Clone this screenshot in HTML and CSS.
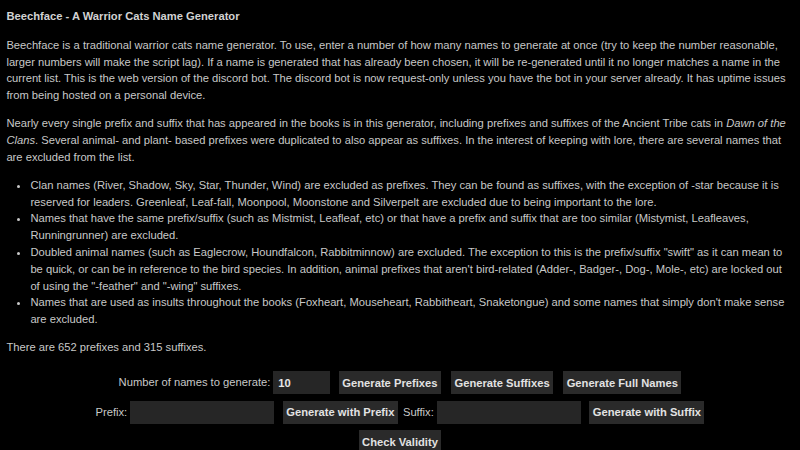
FILE: index.html
```html
<!DOCTYPE html>
<html lang="en">
<head>
<meta charset="utf-8">
<title>Beechface - A Warrior Cats Name Generator</title>
<link rel="stylesheet" href="styles.css">
</head>
<body>
<div class="page">
  <div class="title">Beechface - A Warrior Cats Name Generator</div>
  <p>Beechface is a traditional warrior cats name generator. To use, enter a number of how many names to generate at once (try to keep the number reasonable, larger numbers will make the script lag). If a name is generated that has already been chosen, it will be re-generated until it no longer matches a name in the current list. This is the web version of the discord bot. The discord bot is now request-only unless you have the bot in your server already. It has uptime issues from being hosted on a personal device.</p>
  <p>Nearly every single prefix and suffix that has appeared in the books is in this generator, including prefixes and suffixes of the Ancient Tribe cats in <i>Dawn of the Clans</i>. Several animal- and plant- based prefixes were duplicated to also appear as suffixes. In the interest of keeping with lore, there are several names that are excluded from the list.</p>
  <ul>
    <li>Clan names (River, Shadow, Sky, Star, Thunder, Wind) are excluded as prefixes. They can be found as suffixes, with the exception of -star because it is reserved for leaders. Greenleaf, Leaf-fall, Moonpool, Moonstone and Silverpelt are excluded due to being important to the lore.</li>
    <li>Names that have the same prefix/suffix (such as Mistmist, Leafleaf, etc) or that have a prefix and suffix that are too similar (Mistymist, Leafleaves, Runningrunner) are excluded.</li>
    <li>Doubled animal names (such as Eaglecrow, Houndfalcon, Rabbitminnow) are excluded. The exception to this is the prefix/suffix "swift" as it can mean to be quick, or can be in reference to the bird species. In addition, animal prefixes that aren't bird-related (Adder-, Badger-, Dog-, Mole-, etc) are locked out of using the "-feather" and "-wing" suffixes.</li>
    <li>Names that are used as insults throughout the books (Foxheart, Mouseheart, Rabbitheart, Snaketongue) and some names that simply don't make sense are excluded.</li>
  </ul>
  <p>There are 652 prefixes and 315 suffixes.</p>
  <div class="controls">
    <div class="row">
      <label class="field"><span>Number of names to generate:</span><input class="num" type="text" value="10"></label>
      <button class="btn">Generate Prefixes</button>
      <button class="btn">Generate Suffixes</button>
      <button class="btn">Generate Full Names</button>
    </div>
    <div class="row">
      <label class="field"><span>Prefix:</span><input class="txt" type="text"></label>
      <button class="btn">Generate with Prefix</button>
      <label class="field after-btn"><span>Suffix:</span><input class="txt" type="text"></label>
      <button class="btn">Generate with Suffix</button>
    </div>
    <div class="row">
      <button class="btn">Check Validity</button>
    </div>
  </div>
</div>
</body>
</html>
```
FILE: styles.css
```css
html, body {
  margin: 0;
  padding: 0;
  background: #000;
}
.page {
  padding: 7.5px 6.4px 0 6.4px;
  font-family: "Liberation Sans", Arial, sans-serif;
  font-size: 11.2px;
  line-height: 16.8px;
  color: #c8c8c8;
}
.title {
  font-weight: bold;
  color: #d2d2d2;
  margin-bottom: 12.5px;
}
p {
  margin: 0 0 11.2px 0;
}
ul {
  margin: 0 0 11.2px 0;
  padding-left: 24px;
}
.controls {
  display: flex;
  flex-direction: column;
  gap: 6.5px;
  padding-top: 4px;
}
.row {
  display: flex;
  justify-content: center;
  align-items: center;
  gap: 8.5px;
}
.field {
  display: flex;
  align-items: center;
  gap: 3px;
}
.after-btn {
  margin-left: -3.5px;
}
input {
  font-family: "Liberation Sans", Arial, sans-serif;
  font-size: 11.2px;
  font-weight: bold;
  color: #e6e6e6;
  background: #262626;
  border: none;
  outline: none;
  height: 23px;
  box-sizing: border-box;
  padding: 0 5px;
  margin: 0;
}
.num { width: 57px; }
.txt { width: 144px; }
.btn {
  font-family: "Liberation Sans", Arial, sans-serif;
  font-size: 11.2px;
  font-weight: bold;
  color: #e2e2e2;
  background: #2a2a2a;
  border: none;
  height: 23px;
  padding: 0 3.5px;
  margin: 0;
}
.row .btn + .btn {
  margin-left: 1.5px;
}
```
